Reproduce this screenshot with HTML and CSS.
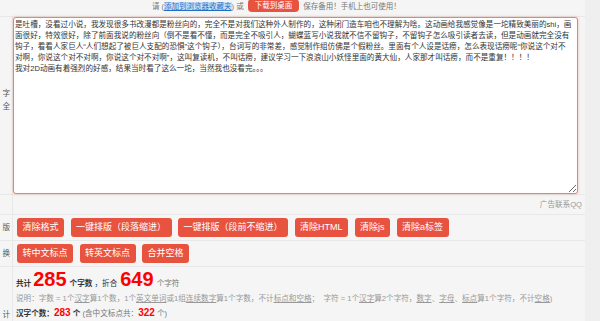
FILE: index.html
```html
<!DOCTYPE html>
<html lang="zh-CN">
<head>
  <meta charset="UTF-8" />
  <meta name="viewport" content="width=device-width, initial-scale=1.0"/>
  <title>字数统计</title>
  <link rel="stylesheet" href="styles.css">
</head>
<body>
  <div class="page">
    <!-- top tip -->
    <div class="top">
      <div class="top-in">
        <span>请 (<a class="fav">添加到浏览器收藏夹</a>) 或</span>
        <a class="btn-sm">下载到桌面</a>
        <span>保存备用！手机上也可使用！</span>
      </div>
    </div>

    <!-- input area -->
    <div class="row row-text">
      <div class="label label-text"><span>字</span><span>全</span></div>
      <div class="cell">
        <textarea class="editor" spellcheck="false">是吐槽，没看过小说，我发现很多书改漫都是粉丝向的，完全不是对我们这种外人制作的，这种闭门造车咱也不理解为啥。这动画给我感觉像是一坨精致美丽的shi，画
面很好，特效很好，除了前面我说的粉丝向（倒不是看不懂，而是完全不吸引人，蝴蝶蓝写小说我就不信不留钩子，不留钩子怎么吸引读者去读，但是动画就完全没有
钩子，看看人家巨人“人们想起了被巨人支配的恐惧”这个钩子），台词写的非常差，感觉制作组仿佛是个假粉丝。里面有个人设是话痨，怎么表现话痨呢“你说这个对不
对啊，你说这个对不对啊，你说这个对不对啊”，这叫复读机，不叫话痨，建议学习一下浪浪山小妖怪里面的黄大仙，人家那才叫话痨，而不是重复！！！！
我对2D动画有着强烈的好感，结果当时看了这么一坨，当然我也没看完。。。</textarea>
      </div>
    </div>

    <div class="row row-ad">
      <div class="label"></div>
      <div class="cell ad">广告联系QQ</div>
    </div>

    <!-- tool buttons -->
    <div class="row row-btn">
      <div class="label"><span>版</span></div>
      <div class="cell btn-cell">
        <button class="btn">清除格式</button>
        <button class="btn">一键排版（段落缩进）</button>
        <button class="btn">一键排版（段前不缩进）</button>
        <button class="btn">清除HTML</button>
        <button class="btn">清除js</button>
        <button class="btn">清除a标签</button>
      </div>
    </div>

    <div class="row row-btn">
      <div class="label"><span>换</span></div>
      <div class="cell btn-cell">
        <button class="btn">转中文标点</button>
        <button class="btn">转英文标点</button>
        <button class="btn">合并空格</button>
      </div>
    </div>

    <!-- result -->
    <div class="row row-stats">
      <div class="label"><span>计</span></div>
      <div class="cell stats">
        <div class="sum">
          <b>共计</b><span class="big">285</span><b>个字数</b> <span class="mid">，折合</span><span class="big">649</span><span class="gray">个字符</span>
        </div>
        <div class="note">说明：字数 = 1个<u>汉字</u>算1个数，1个<u>英文单词</u>或1组<u>连续数字</u>算1个字数，不计<u>标点和空格</u>；&nbsp; 字符 = 1个<u>汉字</u>算2个字符，<u>数字</u>、<u>字母</u>、<u>标点</u>算1个字符，不计<u>空格</u>)</div>
        <div class="count">
          <b>汉字个数：</b><span class="num">283</span> <b>个</b> <span class="gray">(含中文标点共：</span><span class="num">322</span> <span class="gray">个)</span>
        </div>
      </div>
    </div>
  </div>
</body>
</html>
```

FILE: styles.css
```css
* {
  box-sizing: border-box;
}

body {
  margin: 0;
  background-color: #f0efef;
  font-family: "Liberation Sans", "Noto Sans CJK SC", sans-serif;
  font-size: 7.6px;
  color: #333;
  overflow: hidden;
}

.page {
  width: 585px;
  background-color: #f5f5f5;
}

.top {
  height: 19px;
  border-bottom: 1px solid #e8e8e8;
  padding-left: 152px;
}

.top-in {
  display: flex;
  align-items: center;
  gap: 4px;
  height: 14px;
  margin-top: -2px;
  color: #777;
  font-size: 7.5px;
}

.fav {
  color: #1f6fc5;
  text-decoration: underline;
  background-color: #cfe1f7;
}

.btn-sm {
  height: 13px;
  line-height: 13px;
  padding: 0 7px;
  border-radius: 4px;
  background-color: #e8533f;
  color: #fff;
}

.row {
  display: grid;
  grid-template-columns: 13px 1fr;
  border-bottom: 1px solid #e8e8e8;
}

.label {
  display: flex;
  flex-direction: column;
  justify-content: center;
  align-items: flex-end;
  padding-right: 2px;
  border-right: 1px solid #e8e8e8;
  white-space: nowrap;
  line-height: 13px;
  color: #555;
}

.label-text {
  padding-bottom: 11px;
}

.row-text {
  height: 178px;
}

.editor {
  display: block;
  width: 565px;
  height: 177px;
  margin: 0;
  padding: 1px 1px 0;
  border: 1px solid #e9826f;
  border-radius: 3px;
  background-color: #fff;
  box-shadow: 0 0 3px rgba(232, 83, 63, 0.35);
  font-family: inherit;
  font-size: 7.6px;
  line-height: 11px;
  color: #333;
  resize: vertical;
  outline: none;
}

.row-ad {
  height: 20px;
}

.ad {
  text-align: right;
  padding-right: 3px;
  line-height: 19px;
  color: #999;
}

.row-btn {
  height: 26px;
}

.btn-cell {
  display: flex;
  align-items: center;
  gap: 6.5px;
  padding-left: 4px;
}

.btn {
  height: 19px;
  line-height: 19px;
  padding: 0 5.5px;
  border: none;
  border-radius: 3px;
  background-color: #e8533f;
  color: #fff;
  font-family: inherit;
  font-size: 9px;
  cursor: pointer;
}

.row-stats {
  height: 95px;
}

.stats {
  padding: 2px 0 0 3px;
}

.sum {
  height: 20px;
  line-height: 20px;
}

.big {
  margin: 0 3px 0 2px;
  font-size: 20px;
  font-weight: bold;
  color: #f00;
}

.mid {
  margin-right: 1px;
}

.gray {
  color: #777;
}

.note {
  margin-top: 5px;
  line-height: 10px;
  color: #999;
}

.count {
  margin-top: 3px;
  line-height: 12px;
}

.num {
  font-size: 10px;
  font-weight: bold;
  color: #f00;
}
```
